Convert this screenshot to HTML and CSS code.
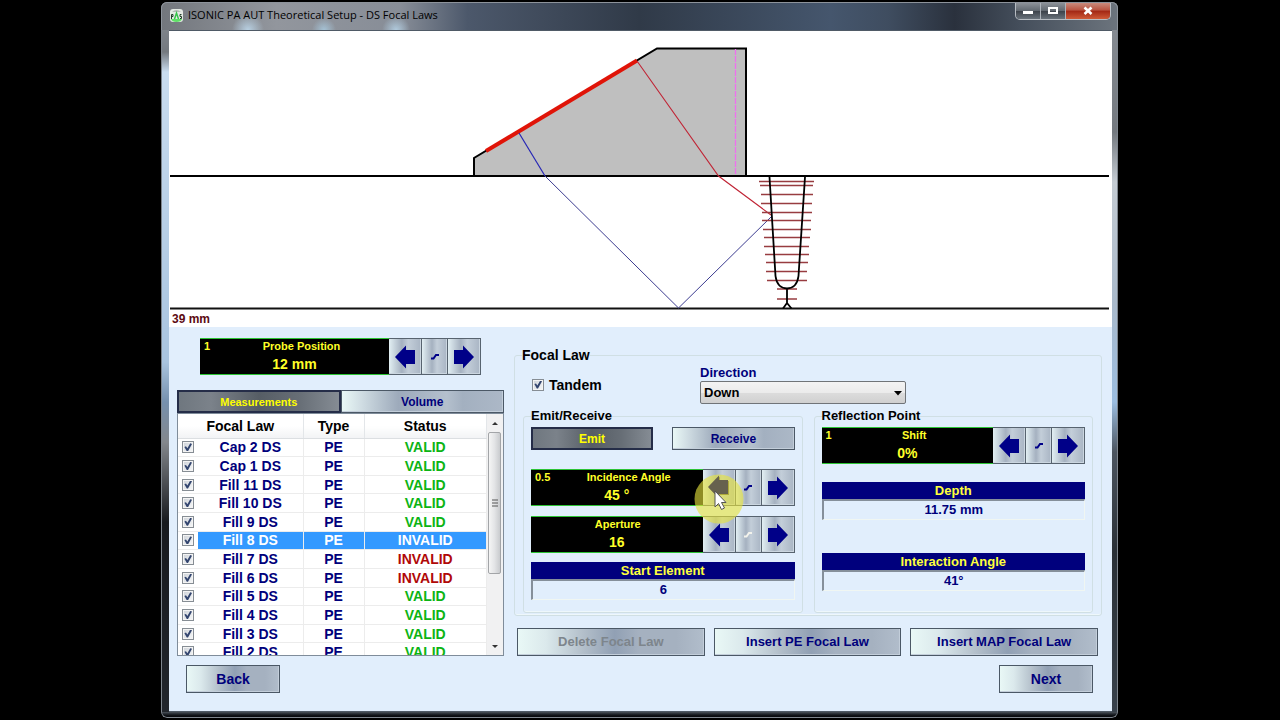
FILE: index.html
```html
<!DOCTYPE html>
<html lang="en">
<head>
<meta charset="utf-8">
<title>ISONIC PA AUT Theoretical Setup - DS Focal Laws</title>
<link rel="stylesheet" href="styles.css">
</head>
<body>
<svg class="defs" aria-hidden="true">
  <symbol id="arrow-left" viewBox="0 0 22 24"><path d="M1 12 12 0.500V5h9v14h-9v4.500z" fill="currentColor"/></symbol>
  <symbol id="arrow-right" viewBox="0 0 22 24"><path d="M21 12 10 0.500V5H1v14h9v4.500z" fill="currentColor"/></symbol>
  <symbol id="step" viewBox="0 0 10 8"><path d="M1 5.500H3.500L6 2H9" fill="none" stroke="currentColor" stroke-width="2"/></symbol>
</svg>
<main class="window">
  <header class="titlebar">
    <svg class="app-icon" viewBox="0 0 13 13" aria-hidden="true">
      <rect width="13" height="13" rx="3" fill="#e3e9e3"/>
      <path d="M2 3Q6.500-1 11 3z" fill="#b5bbb5"/>
      <path d="M1 10h11q-1 3-5.500 3T1 10z" fill="#5fe067"/>
      <path d="M1.500 10V5.500H3V7.500H1.500M11.500 5.500H10V7.500H11.500V9.500H10" fill="none" stroke="#23402a"/>
      <path d="M4.500 10 6.500 4 8.500 10" fill="none" stroke="#35c548" stroke-width="1.500"/>
    </svg>
    <h1 class="title">ISONIC PA AUT Theoretical Setup - DS Focal Laws</h1>
    <div class="caption-buttons">
      <button class="caption" type="button" aria-label="Minimize"><svg width="12" height="12" viewBox="0 0 12 12"><rect x="1" y="6" width="10" height="3" fill="#fff"/></svg></button>
      <button class="caption" type="button" aria-label="Maximize"><svg width="12" height="12" viewBox="0 0 12 12"><rect x="2" y="3" width="8" height="5" fill="none" stroke="#fff" stroke-width="2"/></svg></button>
      <button class="caption close" type="button" aria-label="Close"><svg width="12" height="12" viewBox="0 0 12 12"><path d="M2.500 2.500l7 6.500M9.500 2.500l-7 6.500" stroke="#fff" stroke-width="2.600"/></svg></button>
    </div>
  </header>
  <div class="client">
    <section class="view">
      <svg class="diagram" viewBox="169 31 943 280" role="img" aria-label="Probe and weld section">
        <path d="M474 176V158L657 48.500H746V176z" fill="#bfbfbf" stroke="#000" stroke-width="2"/>
        <path d="M170 176H1109" stroke="#000" stroke-width="2"/>
        <path d="M170 308.500H1109" stroke="#111" stroke-width="2"/>
        <path d="M735.500 49V175" stroke="#ee70ee" stroke-width="1.300" stroke-dasharray="6 1"/>
        <path d="M486 151 637 60.500" stroke="#e01408" stroke-width="4"/>
        <path d="M519 133 545 176" fill="none" stroke="#2525b5" stroke-width="1.200"/>
        <path d="M545 176 678.500 308 771 217" fill="none" stroke="#3c3c90"/>
        <path d="M637 61 718.500 176 771 215" fill="none" stroke="#c02435" stroke-width="1.100"/>
        <path d="M759 181.500h55M760 185.500h53M761 194.500h52M761 203.500h51M762 212.500h50M762 220.500h49M763 229.500h48M764 237.500h46M764 246.500h45M765 254.500h44M766 262.500h42M766 271.500h41M767 280.500h40M777 289h20M777 299h20" stroke="#983c40" stroke-width="1.400"/>
        <path d="M769.500 177 775.500 276Q777 288 787 288.500 797 288 798.500 276L805 177M787 289V303M787 303 783 308.500M787 303 791.500 308.500" fill="none" stroke="#000" stroke-width="1.800"/>
      </svg>
      <p class="depth-note">39 mm</p>
    </section>
    <section class="panel">
      <div class="columns">
        <div class="left">
          <div class="spinner probe">
            <div class="display"><span class="step-size">1</span><span class="name">Probe Position</span><output class="value">12 mm</output></div>
            <button class="key" type="button" aria-label="Decrease probe position"><svg class="arrow"><use href="#arrow-left"/></svg></button>
            <button class="key" type="button" aria-label="Probe position step"><svg class="step"><use href="#step"/></svg></button>
            <button class="key" type="button" aria-label="Increase probe position"><svg class="arrow"><use href="#arrow-right"/></svg></button>
          </div>
          <div class="tabs">
            <button class="btn small active tab" type="button">Measurements</button>
            <button class="btn small tab" type="button">Volume</button>
          </div>
          <div class="list">
            <div class="list-body">
              <table class="laws">
                <colgroup><col class="col-check"><col class="col-law"><col class="col-type"><col class="col-status"></colgroup>
                <thead><tr><th colspan="2">Focal Law</th><th>Type</th><th>Status</th></tr></thead>
                <tbody>
                  <tr><td><input class="tick" type="checkbox" checked aria-label="Cap 2 DS"></td><td>Cap 2 DS</td><td>PE</td><td class="valid">VALID</td></tr>
                  <tr><td><input class="tick" type="checkbox" checked aria-label="Cap 1 DS"></td><td>Cap 1 DS</td><td>PE</td><td class="valid">VALID</td></tr>
                  <tr><td><input class="tick" type="checkbox" checked aria-label="Fill 11 DS"></td><td>Fill 11 DS</td><td>PE</td><td class="valid">VALID</td></tr>
                  <tr><td><input class="tick" type="checkbox" checked aria-label="Fill 10 DS"></td><td>Fill 10 DS</td><td>PE</td><td class="valid">VALID</td></tr>
                  <tr><td><input class="tick" type="checkbox" checked aria-label="Fill 9 DS"></td><td>Fill 9 DS</td><td>PE</td><td class="valid">VALID</td></tr>
                  <tr class="selected"><td><input class="tick" type="checkbox" checked aria-label="Fill 8 DS"></td><td>Fill 8 DS</td><td>PE</td><td>INVALID</td></tr>
                  <tr><td><input class="tick" type="checkbox" checked aria-label="Fill 7 DS"></td><td>Fill 7 DS</td><td>PE</td><td class="invalid">INVALID</td></tr>
                  <tr><td><input class="tick" type="checkbox" checked aria-label="Fill 6 DS"></td><td>Fill 6 DS</td><td>PE</td><td class="invalid">INVALID</td></tr>
                  <tr><td><input class="tick" type="checkbox" checked aria-label="Fill 5 DS"></td><td>Fill 5 DS</td><td>PE</td><td class="valid">VALID</td></tr>
                  <tr><td><input class="tick" type="checkbox" checked aria-label="Fill 4 DS"></td><td>Fill 4 DS</td><td>PE</td><td class="valid">VALID</td></tr>
                  <tr><td><input class="tick" type="checkbox" checked aria-label="Fill 3 DS"></td><td>Fill 3 DS</td><td>PE</td><td class="valid">VALID</td></tr>
                  <tr><td><input class="tick" type="checkbox" checked aria-label="Fill 2 DS"></td><td>Fill 2 DS</td><td>PE</td><td class="valid">VALID</td></tr>
                </tbody>
              </table>
            </div>
            <div class="scrollbar" aria-hidden="true">
              <svg class="scroll-end" viewBox="0 0 16 18"><path d="M5 11 8 8 11 11z" fill="#333"/></svg>
              <div class="thumb"><svg width="8" height="8" viewBox="0 0 8 8"><path d="M1 1h6M1 4h6M1 7h6" stroke="#555"/></svg></div>
              <svg class="scroll-end last" viewBox="0 0 16 18"><path d="M5 8 8 11 11 8z" fill="#333"/></svg>
            </div>
          </div>
        </div>
        <div class="right">
          <fieldset class="group outer">
            <legend>Focal Law</legend>
            <div class="options">
              <label class="tandem"><input class="tick" type="checkbox" checked>Tandem</label>
              <div class="direction">
                <label for="direction">Direction</label>
                <div class="select-wrap">
                  <select id="direction" class="select"><option>Down</option><option>Up</option></select>
                  <svg class="select-arrow" width="8" height="5" viewBox="0 0 8 5" aria-hidden="true"><path d="M0 0h8L4 4.500z" fill="#000"/></svg>
                </div>
              </div>
            </div>
            <div class="groups">
              <fieldset class="group inner">
                <legend>Emit/Receive</legend>
                <div class="modes">
                  <button class="btn small active" type="button">Emit</button>
                  <button class="btn small" type="button">Receive</button>
                </div>
                <div class="spinner incidence">
                  <div class="display"><span class="step-size">0.5</span><span class="name">Incidence Angle</span><output class="value">45 °</output></div>
                  <button class="key hovered" type="button" aria-label="Decrease incidence angle"><svg class="arrow"><use href="#arrow-left"/></svg>
                    <svg class="pointer" width="50" height="50" viewBox="0 0 50 50" aria-hidden="true"><circle cx="25" cy="25" r="24.500" fill="#e6e43c" fill-opacity="0.620"/><path d="M14 13 25 1.500V6H34V20H25V24.500z" fill="#66614e"/><path d="M21 17V33L24.500 29.500 27.500 35.500 30.500 34 27.500 28.500H32z" fill="#fff" stroke="#555" stroke-width="1"/></svg>
                  </button>
                  <button class="key" type="button" aria-label="Incidence angle step"><svg class="step"><use href="#step"/></svg></button>
                  <button class="key" type="button" aria-label="Increase incidence angle"><svg class="arrow"><use href="#arrow-right"/></svg></button>
                </div>
                <div class="spinner aperture">
                  <div class="display"><span class="name">Aperture</span><output class="value">16</output></div>
                  <button class="key front" type="button" aria-label="Decrease aperture"><svg class="arrow"><use href="#arrow-left"/></svg></button>
                  <button class="key off" type="button" aria-label="Aperture step" disabled><svg class="step"><use href="#step"/></svg></button>
                  <button class="key" type="button" aria-label="Increase aperture"><svg class="arrow"><use href="#arrow-right"/></svg></button>
                </div>
                <div class="readout start"><span class="readout-name">Start Element</span><output class="readout-value">6</output></div>
              </fieldset>
              <fieldset class="group inner">
                <legend>Reflection Point</legend>
                <div class="spinner">
                  <div class="display"><span class="step-size">1</span><span class="name">Shift</span><output class="value">0%</output></div>
                  <button class="key" type="button" aria-label="Decrease shift"><svg class="arrow"><use href="#arrow-left"/></svg></button>
                  <button class="key" type="button" aria-label="Shift step"><svg class="step"><use href="#step"/></svg></button>
                  <button class="key" type="button" aria-label="Increase shift"><svg class="arrow"><use href="#arrow-right"/></svg></button>
                </div>
                <div class="readout depth"><span class="readout-name">Depth</span><output class="readout-value">11.75 mm</output></div>
                <div class="readout angle"><span class="readout-name">Interaction Angle</span><output class="readout-value">41°</output></div>
              </fieldset>
            </div>
          </fieldset>
          <div class="actions">
            <button class="btn" type="button" disabled>Delete Focal Law</button>
            <button class="btn" type="button">Insert PE Focal Law</button>
            <button class="btn" type="button">Insert MAP Focal Law</button>
          </div>
        </div>
      </div>
      <footer class="nav">
        <button class="btn nav-btn" type="button">Back</button>
        <button class="btn nav-btn" type="button">Next</button>
      </footer>
    </section>
  </div>
</main>
</body>
</html>
```

FILE: styles.css
```css
* { box-sizing: border-box; }

body {
  margin: 0;
  padding: 2px 162px 0 161px;
  background: #000;
  color: #000;
  font: bold 13px/16px "Liberation Sans", Arial, sans-serif;
}

button, select, input, output { font: inherit; color: inherit; }
button { padding: 0; border-radius: 0; }
.defs { position: absolute; width: 0; height: 0; }

/* Window frame */
.window {
  padding: 0 6px 6px 8px;
  border-radius: 6px;
  background:
    linear-gradient(#4c535b, #23282f 2px, #080a0e 4px, #0d1015) bottom / 100% 6px no-repeat,
    linear-gradient(#8a8f96, #74797f 130px, #c4cbd2 180px, #a9b9ca 300px, #9bbde0 400px, #4c5560 450px, #2a3036 550px, #39424c) right / 6px 100% no-repeat,
    linear-gradient(#8a8f96, #74797f 50px, #c9dcef 70px, #a9c4df 360px, #7690ad 400px, #83878c 440px, #17191d 520px, #22262c) left / 8px 100% no-repeat,
    #626e80;
  box-shadow: inset 0 0 0 1px #7f868e;
}

.titlebar {
  display: flex;
  align-items: flex-start;
  height: 28px;
  margin: 0 -6px 0 -8px;
  padding: 0 6px 0 8px;
  border: 1px solid #8d939b;
  border-bottom: 0;
  border-radius: 6px 6px 0 0;
  background:
    radial-gradient(circle at 86px 27px, #b8d0e2 0, transparent 16px),
    radial-gradient(circle at 162px 27px, #a5c2d5 0, transparent 12px),
    radial-gradient(circle at 234px 27px, #b0cadd 0, transparent 14px),
    linear-gradient(90deg, #73777d, #92969d 12%, #878d97 25%, #4c586b 32%, #303a48 50%, #45566d 70%, #3f4d60 76%, #2a313d 83%, #454f5c 90%, #6c747d);
}

.app-icon { width: 13px; height: 13px; margin-top: 6px; }
.title { flex: 1; margin: 4px 0 0 5px; font: 11px/16px "Open Sans", "Noto Sans", sans-serif; }
.caption-buttons { display: flex; border: 1px solid #b7bcc2; border-top: 0; border-radius: 0 0 5px 5px; overflow: hidden; }
.caption { display: grid; place-items: center; width: 25px; height: 16px; border: 0; border-right: 1px solid #aeb4bb; background: linear-gradient(#8c9198, #60676f 50%, #3c424a 51%, #69727b); }
.caption.close { width: 44px; border-right: 0; background: linear-gradient(#c98a7c, #b95340 45%, #a22714 50%, #cf5b38); }

/* Drawing */
.client { background: #e1eefc; border: 1px solid #4f5a66; border-width: 1px 0; }
.view { background: #fff; }
.diagram { display: block; width: 100%; height: auto; }
.depth-note { margin: 0; padding-left: 3px; font-size: 12px; color: #5c0a12; }

/* Control panel */
.panel { padding: 11px 10px 18px 8px; color: #00007b; }
.columns { display: grid; grid-template-columns: 327fr 588fr; gap: 10px; }
.left { display: flex; flex-direction: column; }

.btn {
  height: 28px;
  border: 1px solid #4b5866;
  background: linear-gradient(90deg, #e9f8f6, #dbe9ec 15%, #b3bfca 35%, #91a0b4 52%, #a5b1c0 65%, #a5b1c0 85%, #b1bdcb);
  box-shadow: inset -1px -1px 0 #c3ceda;
  color: #00007b;
}
.btn:disabled { color: #7d858c; }
.btn.small { height: 23px; font-size: 12px; background: linear-gradient(90deg, #e9f8f6, #d0dde3 12%, #9daabb 35%, #b4c0cd 65%, #a3b0c0 75%, #acb8c7); }
.btn.active, .btn.small.active {
  border: 2px solid #252d48;
  background: linear-gradient(90deg, #6f777f, #7b828a 20%, #565d65 50%, #676e76 75%, #858c94);
  box-shadow: none;
  color: #ff0;
}

/* Numeric spinner */
.spinner { display: grid; grid-template-columns: 1fr 33px 26px 33px; height: 37px; }
.probe { margin: 0 23px 15px; }
.display {
  display: grid;
  grid-template-columns: 28px 1fr;
  grid-template-rows: 16px 1fr;
  border: 1px solid #2cc334;
  border-width: 1px 0;
  background: #000;
  color: #ffff28;
}
.step-size { grid-area: 1 / 1; padding-left: 4px; font-size: 11px; line-height: 14px; }
.name { grid-area: 1 / 1 / 2 / 3; padding-left: 14px; text-align: center; font-size: 11px; line-height: 14px; }
.incidence .name { padding-left: 24px; }
.aperture .name { padding-left: 2px; }
.value { grid-area: 2 / 1 / 3 / 3; text-align: center; font-size: 14px; line-height: 18px; }
.key {
  position: relative;
  display: grid;
  place-items: center;
  border: 1px solid #57636f;
  border-left-width: 0;
  background: linear-gradient(90deg, #e2eff3, #a5b1c0 40%, #c3ced9 60%, #a9b5c4);
  box-shadow: inset -1px -1px 0 #cbd6e0;
  color: #000088;
}
.arrow { width: 22px; height: 24px; }
.step { width: 10px; height: 8px; }
.key.off { color: #f3f3ec; }
.key.hovered { color: #55503c; }
.key.front .arrow { position: relative; z-index: 2; }
.pointer { position: absolute; left: -9px; top: 4px; z-index: 1; }

/* Focal law list */
.tabs { display: grid; grid-template-columns: 1fr 1fr; }
.tab.btn.small { font-size: 12px; }
.tab.btn.active { font-size: 11px; }
.list { display: flex; height: 243px; border: 1px solid #7f8c9a; background: #fff; overflow: hidden; }
.list-body { flex: 1; overflow: hidden; }
.laws { width: 100%; height: 248px; table-layout: fixed; border-collapse: collapse; text-align: center; }
.col-check { width: 20px; }
.col-law { width: 105px; }
.col-type { width: 61px; }
.laws th { height: 24px; padding: 0; border-right: 1px solid #e3e6e9; border-bottom: 1px solid #dcdfe2; background: linear-gradient(#fff 50%, #f2f3f5); color: #000; font-size: 14px; }
.laws td { padding: 0; border-right: 1px solid #ececec; border-bottom: 1px solid #ececec; font-size: 14px; line-height: 16px; }
.laws td:first-child { border-right: 0; line-height: 12px; }
.laws .valid { color: #0cb414; }
.laws .invalid { color: #b00808; }
.selected td { color: #fff; }
.selected td:not(:first-child) { background: #3399ff; }

.tick {
  display: inline-block;
  appearance: none;
  position: relative;
  width: 12px;
  height: 12px;
  margin: 0;
  border: 1px solid #868d94;
  background: linear-gradient(135deg, #cdd2d8, #f7f8f9);
  box-shadow: inset 0 0 0 1px #f4f4f4;
  vertical-align: top;
}
.tick:checked::before {
  content: "";
  position: absolute;
  inset: 1px;
  background: #33456f;
  clip-path: polygon(5% 45%, 25% 38%, 42% 62%, 78% 0, 100% 8%, 50% 100%, 35% 100%);
}

.scrollbar { display: flex; flex-direction: column; width: 16px; background: #f1f1f2; }
.scroll-end { width: 16px; height: 18px; }
.scroll-end.last { margin-top: auto; }
.thumb { display: grid; place-items: center; height: 142px; margin: 0 2px 0 1px; border: 1px solid #a3a5a8; border-radius: 2px; background: linear-gradient(90deg, #f5f5f5, #e3e4e6 50%, #c9cbce); }

/* Focal law settings */
.right { padding-top: 9px; }
.group { min-width: 0; margin: 0; border: 1px solid #d0dfe4; border-radius: 3px; box-shadow: inset 0 -1px 0 #eef7fb; }
.group legend { padding: 0; color: #000; font-size: 14px; }
.outer { padding: 2px 8px; }
.outer > legend { margin-left: -1px; }
.inner { padding: 3px 7px 12px; }
.inner > legend { font-size: 13px; }
.options { display: grid; grid-template-columns: 177fr 206fr 187fr; margin-bottom: 4px; }
.tandem { display: flex; align-items: center; gap: 5px; padding-left: 9px; color: #000; font-size: 14px; }
.direction { display: flex; flex-direction: column; }
.select-wrap { position: relative; }
.select { display: block; appearance: none; width: 100%; height: 23px; padding: 0 3px; border: 1px solid #707478; border-radius: 2px; background: linear-gradient(#f3f3f3, #ebebeb 50%, #dcdcdc 52%, #d0d0d0); color: #000; }
.select-arrow { position: absolute; right: 4px; top: 10px; pointer-events: none; }
.groups { display: grid; grid-template-columns: 1fr 1fr; gap: 11px; }
.modes { display: grid; grid-template-columns: 1fr 1fr; gap: 19px; margin-bottom: 19px; }
.incidence { margin-bottom: 10px; }

.readout { display: flex; flex-direction: column; text-align: center; }
.readout-name { height: 17px; background: #00007d; color: #ffff3c; line-height: 17px; }
.readout-value { height: 21px; border: 1px solid #f0f6f2; border-top: 2px solid #858f9a; border-left: 2px solid #858f9a; line-height: 17px; }
.start { margin-top: 9px; }
.depth { margin-top: 18px; }
.angle { margin-top: 33px; }

.actions { display: grid; grid-template-columns: 1fr 1fr 1fr; gap: 9px; margin-top: 12px; padding: 0 4px 0 3px; }
.nav { display: flex; justify-content: space-between; padding: 9px 9px 0; }
.nav-btn { width: 94px; font-size: 14px; }
```
